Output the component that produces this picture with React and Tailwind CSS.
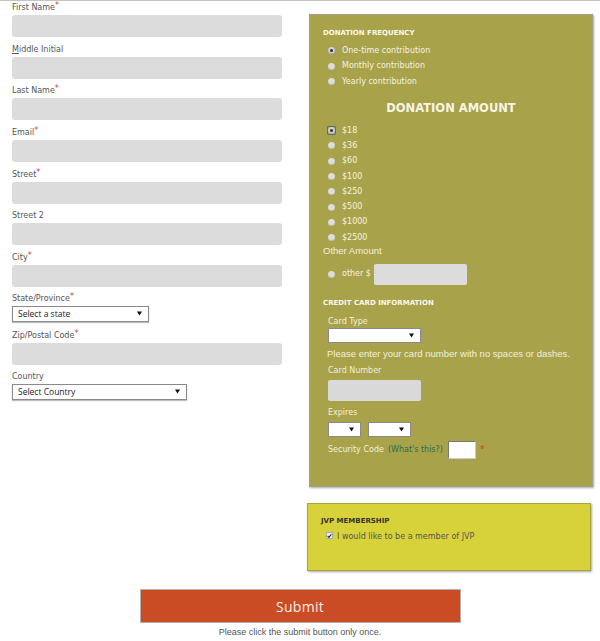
import React from 'react';

const vd = "font-['DejaVu_Sans',Verdana,sans-serif]";
const ar = "font-['Liberation_Sans',Arial,sans-serif]";

function Arrow() {
  return (
    <svg width="5" height="5" viewBox="0 0 5 5" className="shrink-0">
      <path d="M0 0.5 H5 L2.5 4.5 Z" fill="#111" />
    </svg>
  );
}

function Select({ width, text }) {
  return (
    <div
      className={`${width} h-[16px] bg-white border border-[#8a8a8a] shadow-[0_1px_1px_rgba(0,0,0,0.25)] flex items-center justify-between pl-[5px] pr-[6px]`}
    >
      <span className="font-['Open_Sans',sans-serif] text-[8.5px] leading-none text-[#222]">{text}</span>
      <Arrow />
    </div>
  );
}

function Field({ label, required, children, underline }) {
  return (
    <div className="flex flex-col">
      <div className={`${vd} h-[14px] flex items-center text-[8px] text-[#555]`}>
        {underline ? (
          <span>
            <span className="underline">{label[0]}</span>
            {label.slice(1)}
          </span>
        ) : (
          <span>{label}</span>
        )}
        {required && <span className="text-[#d23b3b] relative -top-[2px]">*</span>}
      </div>
      {children}
    </div>
  );
}

function TextBox() {
  return <div className="w-[270px] h-[22px] rounded-[3px] bg-[#dcdcdc]" />;
}

function Radio({ checked, focused }) {
  const dot = (
    <span
      className={`w-[7px] h-[7px] rounded-full flex items-center justify-center ${
        checked ? 'bg-[#cfd0d8]' : 'bg-[#dedede]'
      } shadow-[inset_0_-1px_1px_rgba(0,0,0,0.15)]`}
    >
      {checked && <span className="w-[3px] h-[3px] rounded-full bg-[#333]" />}
    </span>
  );
  if (focused) {
    return (
      <span className="w-[9px] h-[9px] -ml-[1px] -mr-[1px] border border-[#5e6b7c] rounded-[1px] flex items-center justify-center">
        {dot}
      </span>
    );
  }
  return dot;
}

function RadioRow({ label, checked, focused, height }) {
  return (
    <div className={`${height} flex items-center pl-[5px] gap-[7px]`}>
      <Radio checked={checked} focused={focused} />
      <span className={`${vd} text-[8px] text-[#f6f3e2]`}>{label}</span>
    </div>
  );
}

const amounts = ['$18', '$36', '$60', '$100', '$250', '$500', '$1000', '$2500'];

export default function App() {
  return (
    <div className="w-[600px] min-h-[641px] bg-white border-t border-[#c4c4c4]">
      <div className="flex">
        {/* Left column: contact fields */}
        <div className="w-[300px] pl-[12px] flex flex-col">
          <div className="flex flex-col gap-[5.67px]">
            <Field label="First Name" required><TextBox /></Field>
            <Field label="Middle Initial" underline><TextBox /></Field>
            <Field label="Last Name" required><TextBox /></Field>
            <Field label="Email" required><TextBox /></Field>
            <Field label="Street" required><TextBox /></Field>
            <Field label="Street 2"><TextBox /></Field>
            <Field label="City" required><TextBox /></Field>
          </div>
          <div className="mt-[5px] flex flex-col gap-[7px]">
            <Field label="State/Province" required>
              <Select width="w-[137px]" text="Select a state" />
            </Field>
            <Field label="Zip/Postal Code" required><TextBox /></Field>
          </div>
          <div className="mt-[5px]">
            <Field label="Country">
              <Select width="w-[175px]" text="Select Country" />
            </Field>
          </div>
        </div>

        {/* Right column: donation + membership */}
        <div className="flex flex-col pt-[13px]">
          <div className="ml-[9px] w-[284px] h-[473px] bg-[#a8a24b] border border-[#a2a08a] shadow-[1px_1px_2px_rgba(0,0,0,0.35)] pl-[13px] pt-[11px] flex flex-col">
            <div className={`${vd} h-[14px] flex items-center text-[7px] font-bold text-[#fbf8ea]`}>DONATION FREQUENCY</div>
            <div className="mt-[3px]">
              <RadioRow label="One-time contribution" checked height="h-[15.5px]" />
              <RadioRow label="Monthly contribution" height="h-[15.5px]" />
              <RadioRow label="Yearly contribution" height="h-[15.5px]" />
            </div>
            <div className={`${vd} mt-[9.5px] h-[20px] -ml-[13px] flex items-center justify-center text-[11.5px] font-bold text-[#f8f5e4]`}>
              DONATION AMOUNT
            </div>
            <div className="mt-[4px]">
              {amounts.map((a, i) => (
                <RadioRow key={a} label={a} checked={i === 0} focused={i === 0} height="h-[15.3px]" />
              ))}
            </div>
            <div className={`${ar} h-[12px] flex items-center text-[9.5px] text-[#f3f0dc]`}>Other Amount</div>
            <div className="mt-[6px] h-[22px] flex items-center pl-[5px]">
              <Radio />
              <span className={`${vd} ml-[7px] text-[8px] text-[#f6f3e2]`}>other $</span>
              <div className="ml-[3px] w-[93px] h-[21px] rounded-[2px] bg-[#dcdcdc]" />
            </div>
            <div className={`${vd} mt-[11px] h-[14px] flex items-center text-[7px] font-bold text-[#fbf8ea]`}>CREDIT CARD INFORMATION</div>
            <div className="pl-[5px] flex flex-col">
              <div className={`${vd} mt-[6px] h-[12px] flex items-center text-[8px] text-[#f3f0dc]`}>Card Type</div>
              <div>
                <div className="w-[93px] h-[15px] bg-white border border-[#8a8a8a] flex items-center justify-end pr-[6px]">
                  <Arrow />
                </div>
              </div>
              <div className={`${ar} mt-[3.5px] -ml-[1px] h-[14px] flex items-center text-[9.5px] text-[#f3f0dc]`}>
                Please enter your card number with no spaces or dashes.
              </div>
              <div className={`${vd} mt-[4.5px] h-[12px] flex items-center text-[8px] text-[#f3f0dc]`}>Card Number</div>
              <div className="mt-[2.5px] w-[93px] h-[21px] rounded-[2px] bg-[#d9d9d9]" />
              <div className={`${vd} mt-[6.5px] h-[12px] flex items-center text-[8px] text-[#f3f0dc]`}>Expires</div>
              <div className="mt-[3px] flex gap-[7px]">
                <div className="w-[33px] h-[15px] bg-white border border-[#8a8a8a] flex items-center justify-end pr-[6px]">
                  <Arrow />
                </div>
                <div className="w-[43px] h-[15px] bg-white border border-[#8a8a8a] flex items-center justify-end pr-[6px]">
                  <Arrow />
                </div>
              </div>
              <div className="mt-[4px] h-[18px] flex items-center">
                <span className={`${vd} text-[8px] text-[#f3f0dc]`}>Security Code</span>
                <span className={`${vd} ml-[4px] text-[8px] text-[#2f6a4c]`}>(What's this?)</span>
                <div className="ml-[5px] w-[28px] h-[18px] bg-white border-t border-l border-[#777] border-r border-b border-r-[#ccc] border-b-[#ccc]" />
                <span className="ml-[4px] text-[8px] text-[#d23b3b] self-start mt-[2px]">*</span>
              </div>
            </div>
          </div>

          <div className="mt-[16px] ml-[7px] w-[284px] h-[68px] bg-[#d8d23a] border border-[#a9a43c] shadow-[1px_1px_2px_rgba(0,0,0,0.35)] pl-[13px] pt-[10px]">
            <div className={`${vd} h-[14px] flex items-center text-[7px] font-bold text-[#333]`}>JVP MEMBERSHIP</div>
            <div className="mt-[2px] h-[14px] flex items-center pl-[5px]">
              <span className="w-[7px] h-[7px] -mt-[3px] bg-[#e8e8e8] border border-[#aaa] flex items-center justify-center">
                <svg width="6" height="6" viewBox="0 0 6 6">
                  <path d="M0.8 3 L2.3 4.6 L5.3 0.9" stroke="#222" strokeWidth="1.3" fill="none" />
                </svg>
              </span>
              <span className={`${vd} ml-[4px] text-[8px] text-[#555]`}>I would like to be a member of JVP</span>
            </div>
          </div>
        </div>
      </div>

      {/* Submit */}
      <div className="mt-[18px] flex flex-col items-center">
        <button className="w-[321px] h-[34px] bg-[#c94c25] border border-[#b8b0a8] flex items-center justify-center">
          <span className="font-['Open_Sans',sans-serif] text-[14px] text-[#fbeee6] tracking-[0.3px]">Submit</span>
        </button>
        <div className={`${ar} mt-[4px] h-[12px] flex items-center text-[9px] text-[#555]`}>
          Please click the submit button only once.
        </div>
      </div>
    </div>
  );
}
